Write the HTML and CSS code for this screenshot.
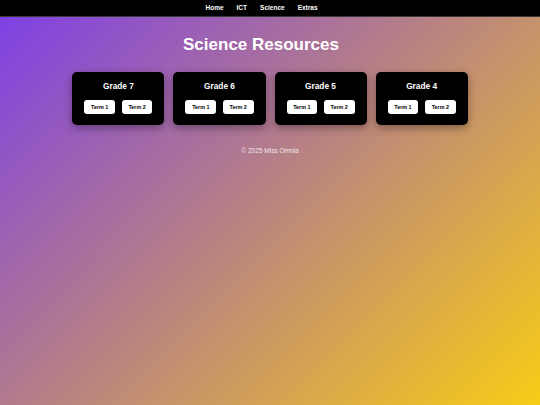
FILE: index.html
```html
<!DOCTYPE html>
<html lang="en">
<head>
<meta charset="utf-8">
<title>Science Resources</title>
<link rel="stylesheet" href="styles.css">
</head>
<body>
<nav class="topnav">
  <a href="#">Home</a>
  <a href="#">ICT</a>
  <a href="#">Science</a>
  <a href="#">Extras</a>
</nav>
<main class="content">
  <h1 class="title">Science Resources</h1>
  <section class="grades">
    <div class="card">
      <h3 class="card-title">Grade 7</h3>
      <div class="terms"><a class="term" href="#">Term 1</a><a class="term" href="#">Term 2</a></div>
    </div>
    <div class="card">
      <h3 class="card-title">Grade 6</h3>
      <div class="terms"><a class="term" href="#">Term 1</a><a class="term" href="#">Term 2</a></div>
    </div>
    <div class="card">
      <h3 class="card-title">Grade 5</h3>
      <div class="terms"><a class="term" href="#">Term 1</a><a class="term" href="#">Term 2</a></div>
    </div>
    <div class="card">
      <h3 class="card-title">Grade 4</h3>
      <div class="terms"><a class="term" href="#">Term 1</a><a class="term" href="#">Term 2</a></div>
    </div>
  </section>
  <footer class="footer">© 2025 Miss Omnia</footer>
</main>
</body>
</html>
```
FILE: styles.css
```css
html, body {
  margin: 0;
  padding: 0;
  height: 100%;
}
body {
  font-family: "Liberation Sans", Arial, sans-serif;
  background: linear-gradient(135deg, #7d3de8 0%, #f7cc16 100%);
  background-attachment: fixed;
  min-height: 405px;
  color: #fff;
}
.topnav {
  background: #000;
  height: 17px;
  border-bottom: 1px solid #3a3a3a;
  box-sizing: border-box;
  display: flex;
  justify-content: center;
  align-items: center;
  gap: 13px;
  padding-right: 17px;
}
.topnav a {
  color: #fff;
  text-decoration: none;
  font-weight: bold;
  font-size: 6.5px;
  line-height: 1;
}
.content {
  display: flex;
  flex-direction: column;
  align-items: center;
}
.title {
  margin: 18px 0 0;
  padding-right: 18px;
  font-size: 17px;
  font-weight: bold;
  line-height: 19px;
}
.grades {
  margin-top: 18px;
  display: flex;
  gap: 9px;
}
.card {
  background: #000;
  border-radius: 5px;
  padding: 10px 12px 11px;
  box-shadow: 0 3px 9px rgba(0, 0, 0, 0.35);
  display: flex;
  flex-direction: column;
  align-items: center;
}
.card-title {
  margin: 0 0 9px;
  font-size: 8.3px;
  line-height: 9px;
  font-weight: bold;
}
.terms {
  display: flex;
  gap: 6.7px;
}
.term {
  background: #fff;
  color: #000;
  text-decoration: none;
  font-weight: bold;
  font-size: 5.4px;
  line-height: 6px;
  padding: 4.2px 6.5px;
  border-radius: 3px;
  width: 17.7px;
  text-align: center;
  white-space: nowrap;
}
.footer {
  margin-top: 22px;
  font-size: 6.5px;
  line-height: 8px;
  color: rgba(255, 255, 255, 0.85);
}
```
